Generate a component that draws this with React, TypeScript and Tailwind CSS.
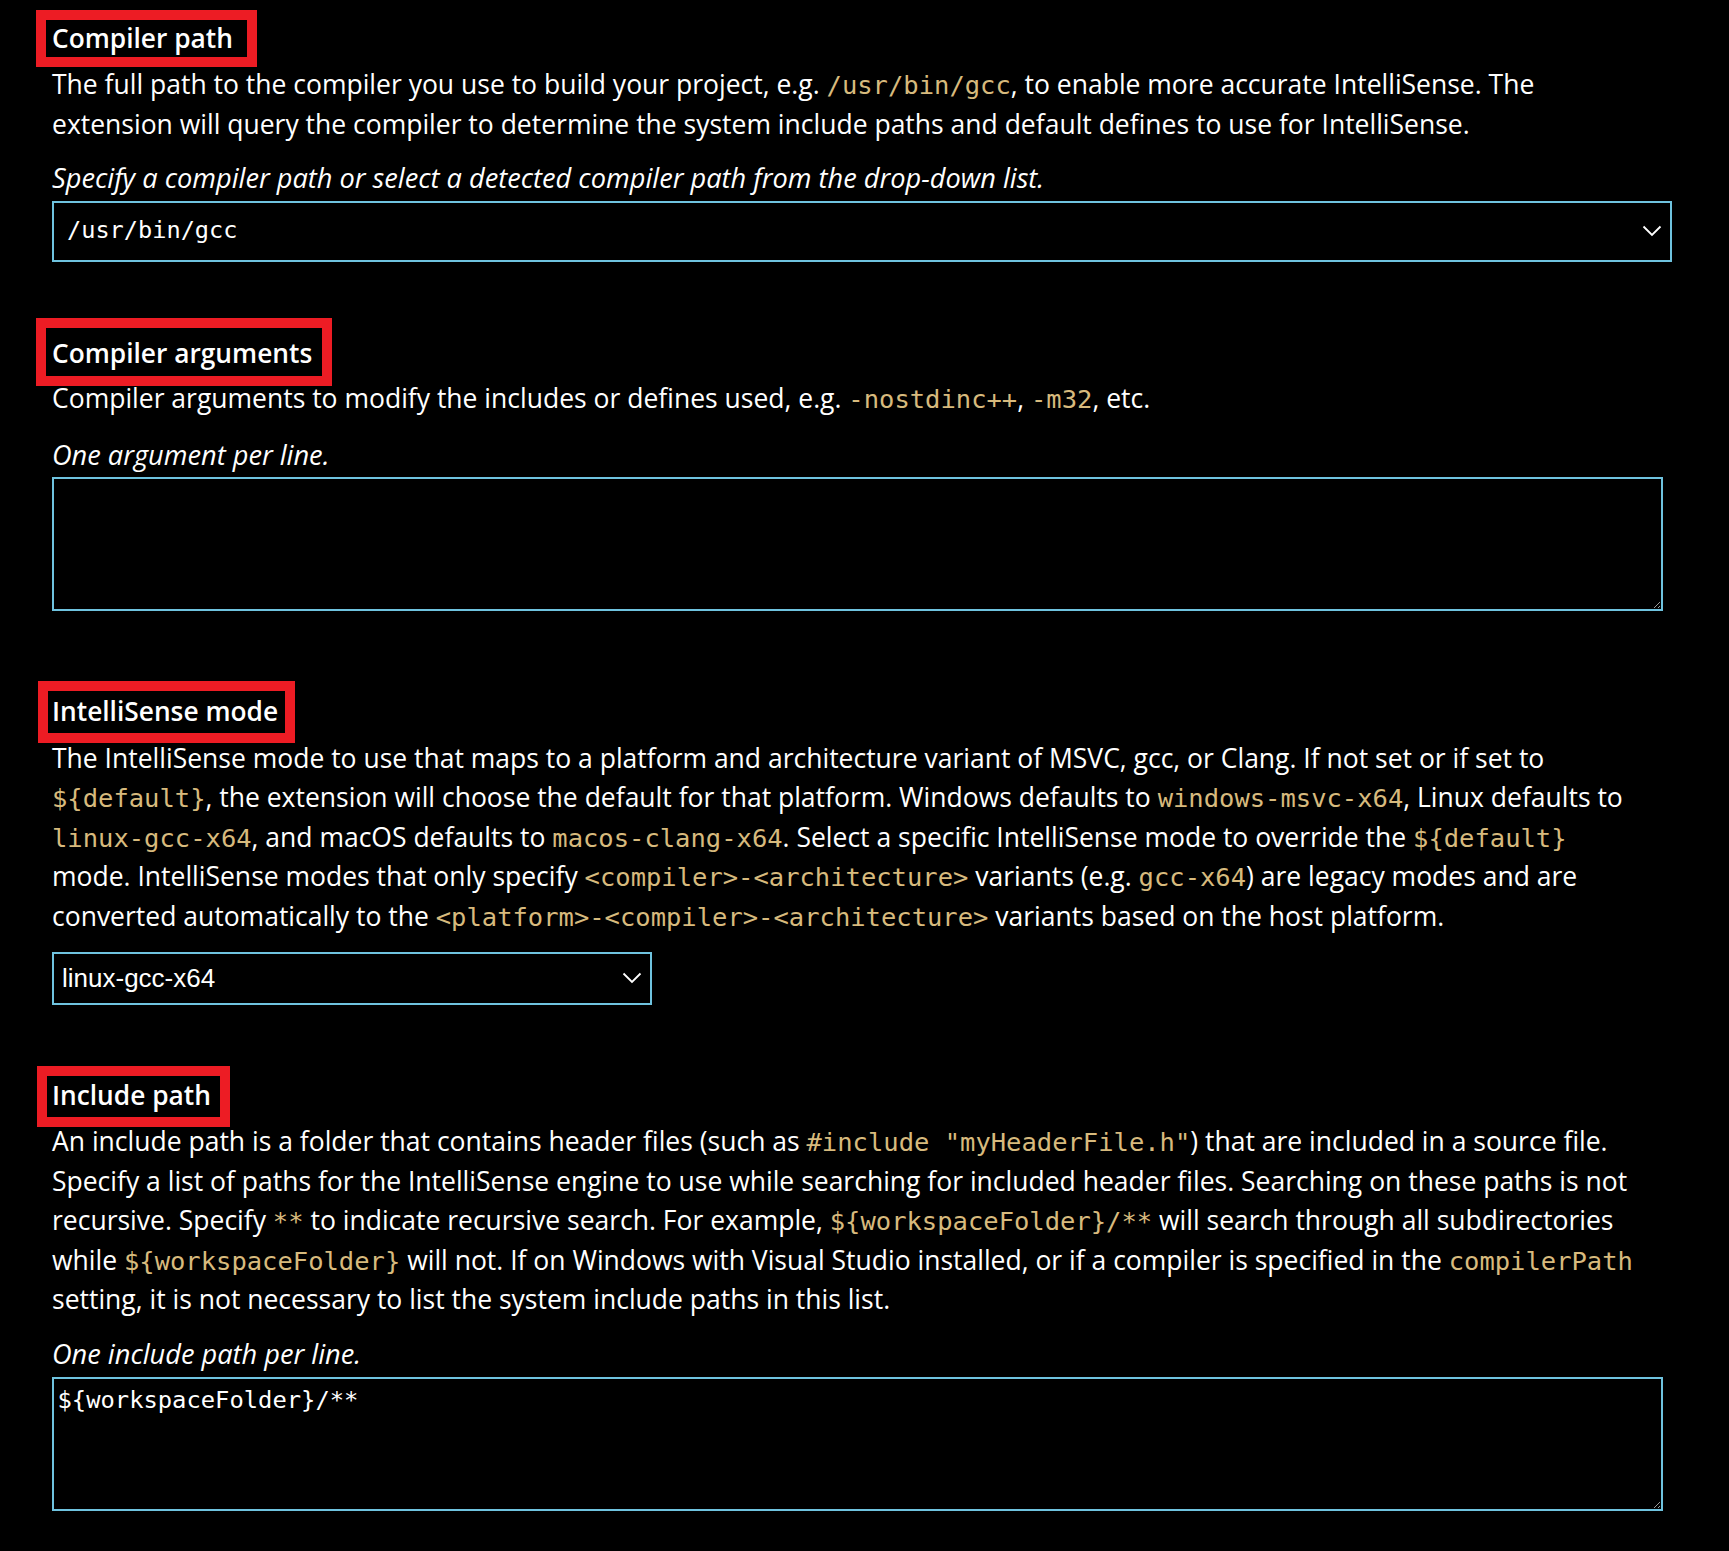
import React from "react";

const C = ({ children }: { children: React.ReactNode }) => (
  <span className="font-['DejaVu_Sans_Mono',monospace] text-[25.5px] text-[#d7ba7d]">{children}</span>
);

const Line = ({ children }: { children: React.ReactNode }) => (
  <div className="whitespace-pre h-[39.5px] leading-[39.5px]">{children}</div>
);

const Chevron = () => (
  <svg width="20" height="12" viewBox="0 0 20 12" className="shrink-0">
    <polyline points="1.5,1.5 10,10 18.5,1.5" fill="none" stroke="#ffffff" strokeWidth="1.8" />
  </svg>
);

export default function App() {
  return (
    <div className="min-h-[1551px] w-full bg-black text-white font-['Open_Sans',sans-serif] text-[26.5px] pl-[52px] pt-[16px] overflow-hidden">
      {/* Compiler path */}
      <div className="relative inline-block h-[45px] leading-[45px] font-semibold text-[26.3px]">
        Compiler path
        <div className="absolute -top-[6px] -bottom-[6px] -left-[16px] -right-[24px] border-[10px] border-[#ed1c24]" />
      </div>
      <div className="mt-[4px]">
        <Line>
          The full path to the compiler you use to build your project, e.g. <C>/usr/bin/gcc</C>, to enable more accurate IntelliSense. The
        </Line>
        <Line>extension will query the compiler to determine the system include paths and default defines to use for IntelliSense.</Line>
      </div>
      <div className="mt-[13.5px] italic h-[39.5px] leading-[39.5px] text-[27.2px]">
        Specify a compiler path or select a detected compiler path from the drop-down list.
      </div>
      <div className="mt-[3.5px] w-[1620px] h-[61px] border-2 border-[#6fc3df] flex items-center justify-between pl-[13px] pr-[8px]">
        <span className="font-['DejaVu_Sans_Mono',monospace] text-[23.6px]">/usr/bin/gcc</span>
        <Chevron />
      </div>

      {/* Compiler arguments */}
      <div className="mt-[69px] relative inline-block h-[45px] leading-[45px] font-semibold text-[26.3px]">
        Compiler arguments
        <div className="absolute -top-[12.5px] -bottom-[10.5px] -left-[16px] -right-[20px] border-[10px] border-[#ed1c24]" />
      </div>
      <div className="mt-[3.5px]">
        <Line>
          Compiler arguments to modify the includes or defines used, e.g. <C>-nostdinc++</C>, <C>-m32</C>, etc.
        </Line>
      </div>
      <div className="mt-[16px] italic h-[39.5px] leading-[39.5px] text-[27.2px]">One argument per line.</div>
      <textarea
        readOnly
        defaultValue=""
        className="block mt-[2.5px] w-[1611px] h-[134.5px] bg-black border-2 border-[#6fc3df] outline-none text-white font-['DejaVu_Sans_Mono',monospace] text-[23.8px] leading-[28px] pt-[7px] px-[3.5px]"
      />

      {/* IntelliSense mode */}
      <div className="mt-[77.5px] relative inline-block h-[45px] leading-[45px] font-semibold text-[26.3px]">
        IntelliSense mode
        <div className="absolute -top-[7.5px] -bottom-[9.5px] -left-[14px] -right-[17px] border-[10px] border-[#ed1c24]" />
      </div>
      <div className="mt-[5px]">
        <Line>
          The IntelliSense mode to use that maps to a platform and architecture variant of MSVC, gcc, or Clang. If not set or if set to
        </Line>
        <Line>
          <C>{"${default}"}</C>, the extension will choose the default for that platform. Windows defaults to <C>windows-msvc-x64</C>, Linux defaults to
        </Line>
        <Line>
          <C>linux-gcc-x64</C>, and macOS defaults to <C>macos-clang-x64</C>. Select a specific IntelliSense mode to override the <C>{"${default}"}</C>
        </Line>
        <Line>
          mode. IntelliSense modes that only specify <C>{"<compiler>-<architecture>"}</C> variants (e.g. <C>gcc-x64</C>) are legacy modes and are
        </Line>
        <Line>
          converted automatically to the <C>{"<platform>-<compiler>-<architecture>"}</C> variants based on the host platform.
        </Line>
      </div>
      <div className="mt-[15.5px] w-[600px] h-[53px] border-2 border-[#6fc3df] flex items-center justify-between pl-[8px] pr-[8px]">
        <span className="font-['Liberation_Sans',Arial,sans-serif] text-[26px]">linux-gcc-x64</span>
        <Chevron />
      </div>

      {/* Include path */}
      <div className="mt-[68px] relative inline-block h-[45px] leading-[45px] font-semibold text-[26.3px]">
        Include path
        <div className="absolute -top-[6.5px] -bottom-[9.5px] -left-[15px] -right-[19.5px] border-[10px] border-[#ed1c24]" />
      </div>
      <div className="mt-[4.5px]">
        <Line>
          An include path is a folder that contains header files (such as <C>{'#include "myHeaderFile.h"'}</C>) that are included in a source file.
        </Line>
        <Line>
          Specify a list of paths for the IntelliSense engine to use while searching for included header files. Searching on these paths is not
        </Line>
        <Line>
          recursive. Specify <C>**</C> to indicate recursive search. For example, <C>{"${workspaceFolder}/**"}</C> will search through all subdirectories
        </Line>
        <Line>
          while <C>{"${workspaceFolder}"}</C> will not. If on Windows with Visual Studio installed, or if a compiler is specified in the <C>compilerPath</C>
        </Line>
        <Line>setting, it is not necessary to list the system include paths in this list.</Line>
      </div>
      <div className="mt-[14px] italic h-[39.5px] leading-[39.5px] text-[27.2px]">One include path per line.</div>
      <textarea
        readOnly
        defaultValue={"${workspaceFolder}/**"}
        className="block mt-[3.5px] w-[1611px] h-[134.5px] bg-black border-2 border-[#6fc3df] outline-none text-white font-['DejaVu_Sans_Mono',monospace] text-[23.8px] leading-[28px] pt-[7px] px-[3.5px]"
      />
    </div>
  );
}
